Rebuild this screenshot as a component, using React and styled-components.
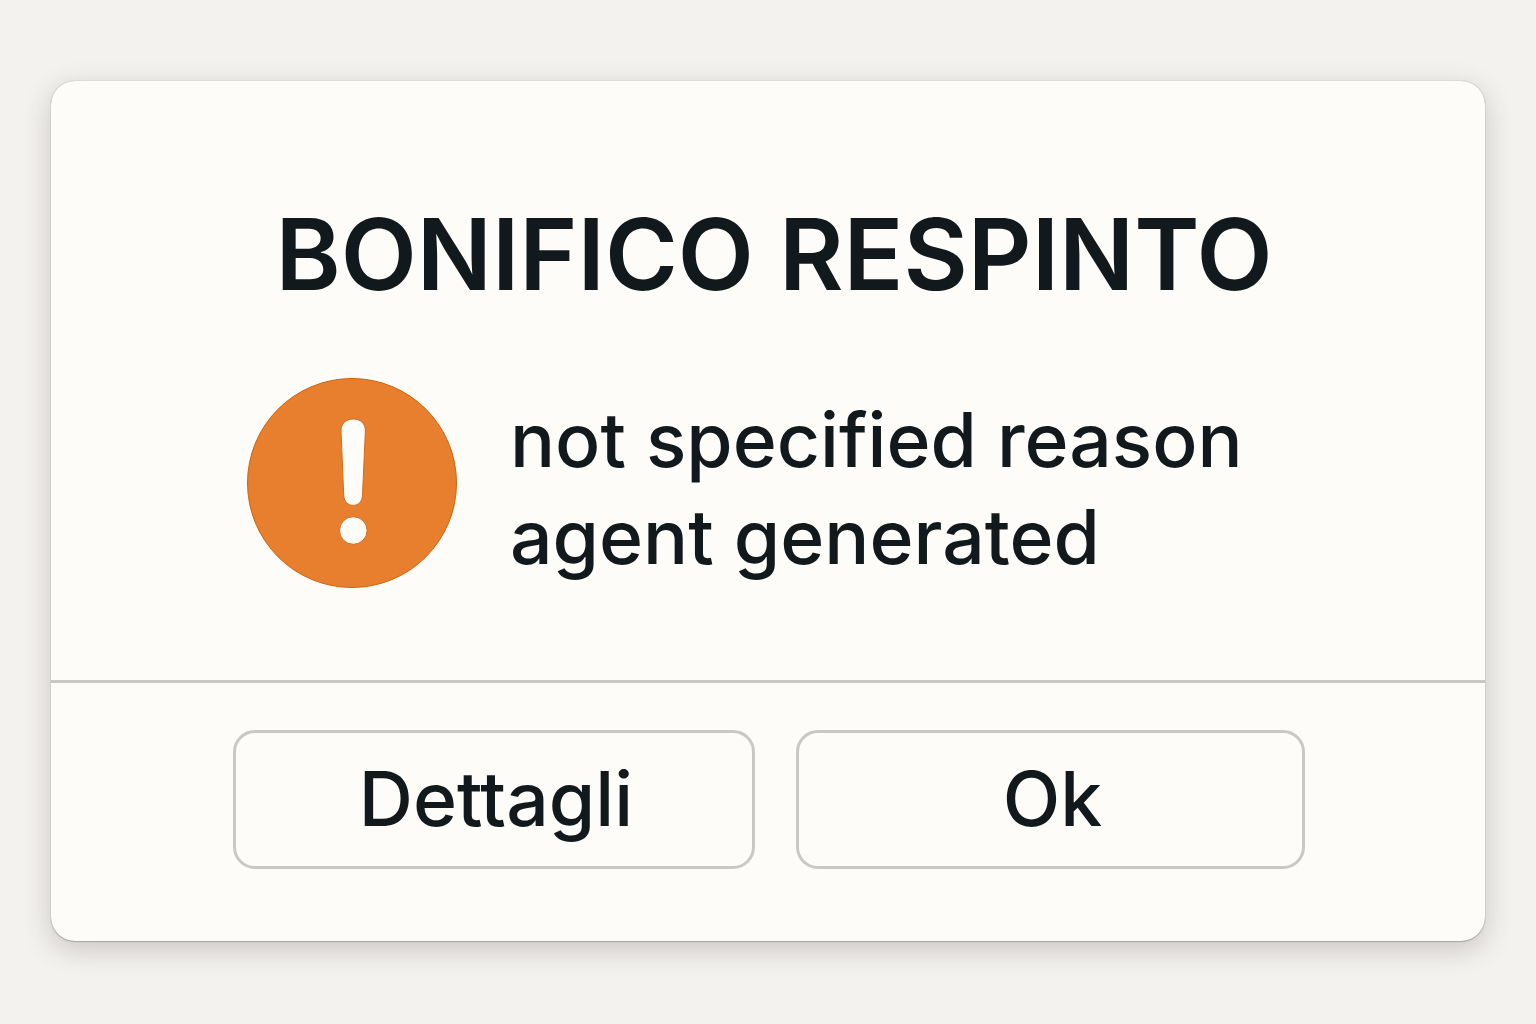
import React from 'react'
import styled, { createGlobalStyle } from 'styled-components'

const GlobalStyle = createGlobalStyle`
  * {
    box-sizing: border-box;
  }
  body {
    margin: 0;
    background-color: #f4f2ef;
    color: #12191c;
    font-family: Inter, 'Liberation Sans', sans-serif;
  }
`

const WarningIcon = () => (
  <Icon viewBox="0 0 210 210" aria-hidden="true">
    <circle cx="105" cy="105" r="104.5" fill="#e77f2e" stroke="#cf640f" />
    <path
      d="M94 53C93.8 46 98.5 41 106.200 41S118.600 46 118.400 53L115.500 117C115.200 123.500 111.500 127.400 106.200 127.400S97 123.500 96.700 117Z"
      fill="#fdfcf9"
      stroke="#d66c18"
    />
    <circle cx="106.3" cy="152.5" r="13.8" fill="#fdfcf9" stroke="#d66c18" />
  </Icon>
)

const App = () => {
  return (
    <Page>
      <GlobalStyle />
      <Dialog role="alertdialog" aria-labelledby="title" aria-describedby="reason">
        <Content>
          <Title id="title">BONIFICO RESPINTO</Title>
          <Message>
            <WarningIcon />
            <Reason id="reason">
              not specified reason
              <br />
              agent generated
            </Reason>
          </Message>
        </Content>
        <Actions>
          <Button type="button" $grow={522}>
            Dettagli
          </Button>
          <Button type="button" $grow={509}>
            Ok
          </Button>
        </Actions>
      </Dialog>
    </Page>
  )
}

const Page = styled.main`
  min-height: 100vh;
  padding: 81px 51px;
`

const Dialog = styled.section`
  border-radius: 24px;
  background-color: #fdfcf9;
  box-shadow:
    0 0 1px rgba(60, 55, 50, 0.5),
    0 1px 1px rgba(60, 55, 50, 0.25),
    0 8px 28px rgba(60, 55, 50, 0.24);
`

const Content = styled.div`
  padding: 111px 180px 92px;
`

const Title = styled.h1`
  margin: 0 0 61px;
  padding-left: 12px;
  font-size: 99px;
  font-weight: 600;
  line-height: 125px;
  text-align: center;
`

const Message = styled.div`
  display: flex;
  align-items: center;
  gap: 53px;
  padding-left: 16px;
`

const Icon = styled.svg`
  flex: none;
  width: 210px;
  height: 210px;
`

const Reason = styled.p`
  margin: 0;
  padding-top: 10px;
  font-size: 75px;
  font-weight: 500;
  line-height: 97px;
`

const Actions = styled.div`
  display: flex;
  gap: 41px;
  padding: 47px 180px 72px 182px;
  border-top: 3px solid #c9c8c5;
`

const Button = styled.button`
  flex: ${(props) => props.$grow} 1 0;
  height: 139px;
  padding: 0 0 2px 4px;
  border: 3px solid #c9c8c5;
  border-radius: 22px;
  background: transparent;
  color: inherit;
  font-family: inherit;
  font-size: 75px;
  font-weight: 500;
  cursor: pointer;
  &:hover {
    background-color: #f6f4f0;
  }
`

export default App
